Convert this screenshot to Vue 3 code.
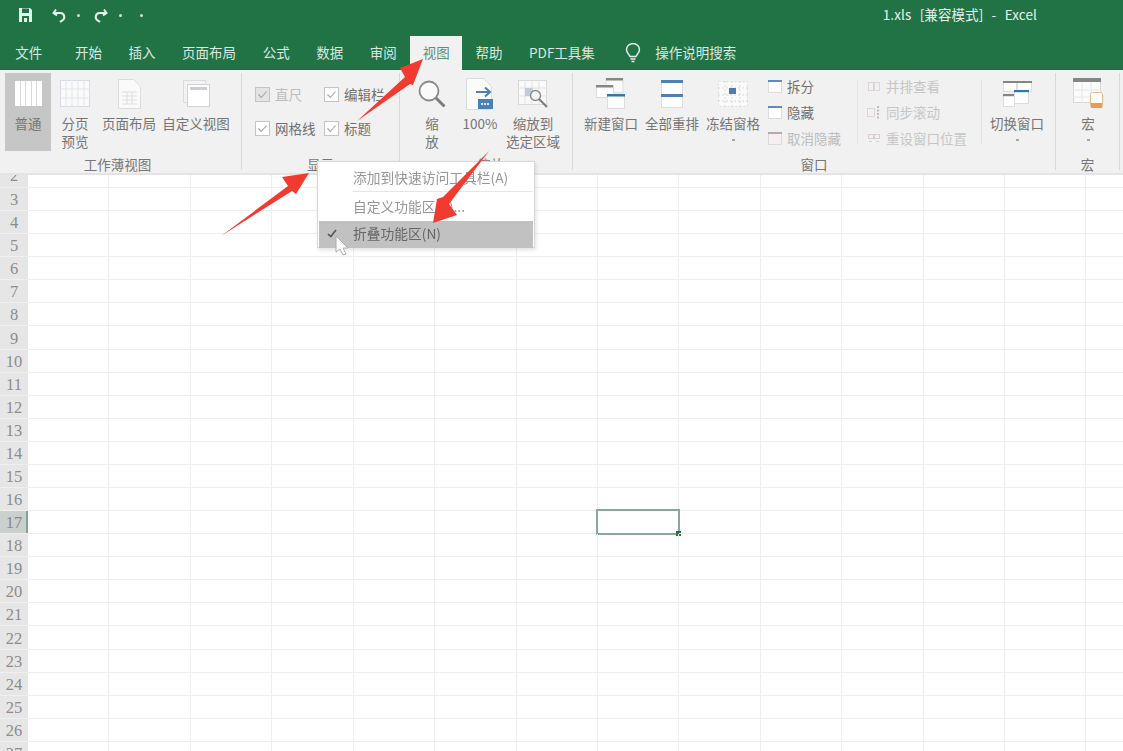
<template>
  <div class="page">
    <!-- Title bar -->
    <header class="titlebar">
      <div class="qat">
        <svg class="qat-save" width="15" height="16" viewBox="0 0 15 16">
          <path d="M1 1h11l2 2v12H1z" fill="#e8f1ec" />
          <rect x="4" y="1.5" width="7" height="4.5" fill="#217346" />
          <rect x="4" y="9" width="7" height="6" fill="#217346" />
          <rect x="6" y="11" width="3" height="4" fill="#e8f1ec" />
        </svg>
        <svg class="qat-undo" width="15" height="15" viewBox="0 0 15 15">
          <path d="M4 1.500 1.500 5 5 7.500M2 5h6.500a4 4 0 0 1 1.500 7.600L8 14" fill="none" stroke="#e8f1ec" stroke-width="2" />
        </svg>
        <span class="qat-dot"></span>
        <svg class="qat-redo" width="15" height="15" viewBox="0 0 15 15">
          <path d="M11 1.500 13.500 5 10 7.500M13 5H6.500a4 4 0 0 0-1.500 7.600L7 14" fill="none" stroke="#e8f1ec" stroke-width="2" />
        </svg>
        <span class="qat-dot second"></span>
        <span class="qat-dot third"></span>
      </div>
      <div class="doc-title">1.xls&nbsp; [兼容模式]&nbsp; -&nbsp; Excel</div>
    </header>

    <!-- Tabs -->
    <nav class="tabs">
      <span
        v-for="tab in tabs"
        :key="tab"
        :class="['tab', { active: tab === '视图', first: tab === '文件' }]"
      >{{ tab }}</span>
      <svg class="bulb" width="16" height="20" viewBox="0 0 16 20">
        <path d="M5 13.500C4 11 1.500 9.500 1.500 6.800a6.500 6.300 0 0 1 13 0C14.500 9.500 12 11 11 13.500z" fill="none" stroke="#e8f1ec" stroke-width="1.400" />
        <path d="M5.500 16h5M6.500 18.500h3" stroke="#e8f1ec" stroke-width="1.400" />
      </svg>
      <span class="tab search">操作说明搜索</span>
    </nav>

    <!-- Ribbon -->
    <section class="ribbon">
      <div class="group g-views">
        <div class="group-body">
          <div class="big selected w46">
            <div class="big-icon">
              <svg width="27" height="25" viewBox="0 0 27 25">
                <rect width="27" height="25" fill="#fff" />
                <path d="M5.500 0v25M10.500 0v25M16.500 0v25M21.500 0v25" stroke="#dadada" />
              </svg>
            </div>
            <span class="big-text">普通</span>
          </div>
          <div class="big w46">
            <div class="big-icon">
              <svg width="30" height="27" viewBox="0 0 30 27">
                <rect x=".5" y=".5" width="29" height="26" fill="#fafafa" stroke="#d8dce2" />
                <path d="M6 0v27M12 0v27M18 0v27M24 0v27M0 9h30M0 18h30" stroke="#e2e5ea" />
              </svg>
            </div>
            <span class="big-text">分页<br />预览</span>
          </div>
          <div class="big w60">
            <div class="big-icon">
              <svg width="23" height="30" viewBox="0 0 23 30">
                <path d="M.5.500h15l7 7v22H.5z" fill="#fafafa" stroke="#dcdcdc" />
                <path d="M4 13h15M4 17h15M4 21h15M4 25h15M9 13v12M14 13v12" stroke="#dedede" />
              </svg>
            </div>
            <span class="big-text">页面布局</span>
          </div>
          <div class="big w72">
            <div class="big-icon">
              <svg width="27" height="27" viewBox="0 0 27 27">
                <rect x=".5" y=".5" width="22" height="22" fill="#f2f2f2" stroke="#dcdcdc" />
                <rect x="4.500" y="4.500" width="22" height="22" fill="#fff" stroke="#d2d2d2" />
                <rect x="7" y="7" width="17" height="3" fill="#c9ced5" />
              </svg>
            </div>
            <span class="big-text">自定义视图</span>
          </div>
        </div>
        <div class="group-label">工作薄视图</div>
      </div>

      <div class="group g-show">
        <div class="group-body checks">
          <label v-for="c in checks" :key="c.text" :class="['check', { off: c.off }]">
            <svg width="15" height="15" viewBox="0 0 15 15">
              <rect x=".5" y=".5" width="14" height="14" :fill="c.off ? '#e4e4e4' : '#fff'" stroke="#c4c4c4" />
              <path d="M3.500 7.500 6.300 10.500 11.500 4.500" fill="none" stroke="#a5a5a5" stroke-width="1.100" />
            </svg>
            <span>{{ c.text }}</span>
          </label>
        </div>
        <div class="group-label">显示</div>
      </div>

      <div class="group g-zoom">
        <div class="group-body">
          <div class="big w46">
            <div class="big-icon">
              <svg width="28" height="28" viewBox="0 0 28 28">
                <circle cx="11" cy="11" r="9.500" fill="#fafafa" stroke="#8a8a8a" stroke-width="1.800" />
                <path d="M18 18 26.500 26.500" stroke="#7d7d7d" stroke-width="3" />
              </svg>
            </div>
            <span class="big-text">缩<br />放</span>
          </div>
          <div class="big w50">
            <div class="big-icon">
              <svg width="28" height="32" viewBox="0 0 28 32">
                <path d="M.5.500h17l8 8v23H.5z" fill="#fbfbfb" stroke="#dcdcdc" />
                <path d="M10 14h14M19 9.500l5 4.500-5 4.500" fill="none" stroke="#4a80b8" stroke-width="2" />
                <rect x="12" y="21" width="15" height="10" fill="#4a80b8" />
                <path d="M15 26h9" stroke="#dfe8f2" stroke-width="2" stroke-dasharray="2 1" />
              </svg>
            </div>
            <span class="big-text">100%</span>
          </div>
          <div class="big w56">
            <div class="big-icon">
              <svg width="30" height="28" viewBox="0 0 30 28">
                <rect x=".5" y=".5" width="28" height="24" fill="#fafafa" stroke="#d8d8d8" />
                <path d="M7 0v25M14 0v25M21 0v25M0 8h29M0 16h29" stroke="#e2e2e2" />
                <rect x="7" y="8" width="8" height="8" fill="#c2ccd9" />
                <circle cx="17.500" cy="15.500" r="5" fill="#f6f6f6" stroke="#8a8a8a" stroke-width="1.400" />
                <path d="M21 19 29 27" stroke="#7d7d7d" stroke-width="2.200" />
              </svg>
            </div>
            <span class="big-text">缩放到<br />选定区域</span>
          </div>
        </div>
        <div class="group-label">缩放</div>
      </div>

      <div class="group g-window">
        <div class="group-body">
          <div class="big w60">
            <div class="big-icon">
              <svg width="30" height="31" viewBox="0 0 30 31">
                <rect x="10" y=".5" width="17" height="14" fill="#f9f9f9" stroke="#ddd" />
                <rect x="10" y="0" width="17" height="2.500" fill="#858585" />
                <rect x=".5" y="7.500" width="17" height="12" fill="#fff" stroke="#ddd" />
                <rect x="0" y="7" width="17" height="2.500" fill="#858585" />
                <rect x="11.500" y="16.500" width="17" height="14" fill="#fff" stroke="#ddd" />
                <rect x="11" y="16" width="18" height="2.500" fill="#2d79a8" />
              </svg>
            </div>
            <span class="big-text">新建窗口</span>
          </div>
          <div class="big w60">
            <div class="big-icon">
              <svg width="22" height="28" viewBox="0 0 22 28">
                <rect x=".5" y=".5" width="21" height="27" fill="#fff" stroke="#ddd" />
                <rect width="22" height="3" fill="#4f80b4" />
                <rect y="14" width="22" height="3" fill="#4f80b4" />
              </svg>
            </div>
            <span class="big-text">全部重排</span>
          </div>
          <div class="big w60">
            <div class="big-icon">
              <svg width="30" height="26" viewBox="0 0 30 26">
                <rect x=".5" y=".5" width="29" height="25" fill="#fafafa" stroke="#ddd" stroke-dasharray="2 2" />
                <path d="M7 0v26M14 0v26M22 0v26M0 7h30M0 14h30M0 20h30" stroke="#d9d9d9" stroke-dasharray="2 2" />
                <rect x="11" y="7" width="7" height="6" fill="#4f7db2" />
              </svg>
            </div>
            <span class="big-text">冻结窗格</span>
            <span class="caret"></span>
          </div>
          <ul class="small-list">
            <li v-for="s in winActions" :key="s">
              <svg width="14" height="13" viewBox="0 0 14 13">
                <rect x=".5" y=".5" width="13" height="12" :fill="s === '取消隐藏' ? '#f6eef0' : '#fff'" stroke="#dcdcdc" />
                <rect width="14" height="2" :fill="s === '取消隐藏' ? '#b9a9ae' : '#5f8cbc'" />
              </svg>
              <span :class="{ faded: s === '取消隐藏' }">{{ s }}</span>
            </li>
          </ul>
          <ul class="small-list disabled">
            <li>
              <svg width="14" height="13" viewBox="0 0 14 13">
                <rect x="1.500" y="2.500" width="5" height="8" fill="none" stroke="#dcd7d7" />
                <rect x="7.500" y="2.500" width="5" height="8" fill="none" stroke="#dcd7d7" />
              </svg>
              <span>并排查看</span>
            </li>
            <li>
              <svg width="14" height="13" viewBox="0 0 14 13">
                <rect x=".5" y="2.500" width="7" height="8" fill="#f6eef0" stroke="#dcd7d7" />
                <path d="M11 0v13" stroke="#a8a8a8" stroke-width="1.400" stroke-dasharray="2 1.500" />
              </svg>
              <span>同步滚动</span>
            </li>
            <li>
              <svg width="14" height="13" viewBox="0 0 14 13">
                <rect x="1.500" y="2.500" width="5" height="4" fill="#f6eef0" stroke="#d8d0d0" />
                <rect x="7.500" y="2.500" width="5" height="4" fill="#f6eef0" stroke="#d8d0d0" />
                <path d="M2 9.500h3M9 9.500h3" stroke="#d0d0d0" />
              </svg>
              <span>重设窗口位置</span>
            </li>
          </ul>
          <div class="big w60 switch">
            <div class="big-icon">
              <svg width="29" height="26" viewBox="0 0 29 26">
                <rect x=".5" y=".5" width="13" height="10" fill="#fff" stroke="#ddd" />
                <rect x="14.500" y=".5" width="14" height="10" fill="#fff" stroke="#ddd" />
                <rect width="14" height="2" fill="#858585" />
                <rect x="14" width="15" height="2" fill="#858585" />
                <rect x=".5" y="13.500" width="11" height="12" fill="#fff" stroke="#ddd" />
                <rect y="13" width="11" height="2.200" fill="#858585" />
                <rect x="11.500" y="9.500" width="14" height="13" fill="#fff" stroke="#ddd" />
                <rect x="11" y="9" width="15" height="2.200" fill="#2d79a8" />
              </svg>
            </div>
            <span class="big-text">切换窗口</span>
            <span class="caret"></span>
          </div>
        </div>
        <div class="group-label">窗口</div>
      </div>

      <div class="group g-macro">
        <div class="group-body">
          <div class="big w50">
            <div class="big-icon">
              <svg width="31" height="31" viewBox="0 0 31 31">
                <rect x=".5" y=".5" width="27" height="24" fill="#fbfbfb" stroke="#d8d8d8" />
                <rect width="28" height="4" fill="#858585" />
                <path d="M9 4v21M18 4v21M0 12h28M0 19h28" stroke="#e6e6e6" />
                <rect x="17.500" y="14.500" width="12" height="15" rx="2" fill="#fff" stroke="#eeb88a" />
                <rect x="18" y="25" width="11" height="5" fill="#e9995a" />
              </svg>
            </div>
            <span class="big-text">宏</span>
            <span class="caret"></span>
          </div>
        </div>
        <div class="group-label">宏</div>
      </div>
    </section>

    <!-- Sheet -->
    <main class="sheet">
      <div
        v-for="row in rows"
        :key="row"
        :class="['row', { clipped: row === 2, current: row === 17 }]"
      >
        <div class="row-head">{{ row }}</div>
        <div v-for="col in 14" :key="col" class="cell">
          <div v-if="row === 17 && col === 8" class="selection"><i></i></div>
        </div>
      </div>
    </main>

    <!-- Context menu -->
    <div class="ctx-menu">
      <div class="ctx-item">添加到快速访问工具栏(A)</div>
      <div class="ctx-sep"></div>
      <div class="ctx-item">自定义功能区(R)...</div>
      <div class="ctx-item hover">
        <svg class="tick" width="10" height="9" viewBox="0 0 10 9">
          <path d="M1 5 3.800 7.500 9 1" fill="none" stroke="#555" stroke-width="1.600" />
        </svg>
        折叠功能区(N)
      </div>
    </div>

    <!-- Mouse pointer and red annotation arrows -->
    <svg class="overlay" width="1123" height="751" viewBox="0 0 1123 751">
      <path d="M336 236v16l4-3 3 6 3-1-3-6h5z" fill="#fff" stroke="#aaa" />
      <path d="M423 59 400 68 405 77 357 121 410 84 413 85z" fill="#f23b30" />
      <path d="M309 173 282 177 288 186 221 236 292 191 296 194z" fill="#f23b30" />
      <path d="M433 223 457 215 449 204 489 151 443 197 437 199z" fill="#f23b30" />
    </svg>
  </div>
</template>

<script setup>
const tabs = ['文件', '开始', '插入', '页面布局', '公式', '数据', '审阅', '视图', '帮助', 'PDF工具集']

const checks = [
  { text: '直尺', off: true },
  { text: '编辑栏' },
  { text: '网格线' },
  { text: '标题' }
]

const winActions = ['拆分', '隐藏', '取消隐藏']

const rows = Array.from({ length: 26 }, (_, i) => i + 2)
</script>

<style>
html,
body {
  margin: 0;
  overflow: hidden;
  background: #fff;
}
</style>

<style scoped>
.page {
  position: relative;
  width: 1123px;
  height: 751px;
  overflow: hidden;
  filter: blur(0.6px);
  font: 13.500px "Noto Sans CJK SC", "Noto Sans", sans-serif;
  color: #707070;
}

/* Title bar */
.titlebar {
  height: 36px;
  background: #217346;
  display: flex;
  justify-content: space-between;
  align-items: flex-start;
  color: #e8f1ec;
}
.qat {
  display: flex;
  align-items: center;
  height: 30px;
  padding-left: 18px;
}
.qat-undo {
  margin-left: 19px;
}
.qat-dot {
  width: 3px;
  height: 3px;
  margin-left: 10px;
  background: #cfe0d6;
  border-radius: 50%;
}
.qat-redo {
  margin-left: 13px;
}
.qat-dot.second {
  margin-left: 11px;
}
.qat-dot.third {
  margin-left: 18px;
}
.doc-title {
  margin-right: 86px;
  line-height: 29px;
  font-size: 13.500px;
  word-spacing: 1px;
  letter-spacing: 0.1px;
}

/* Tabs */
.tabs {
  height: 34px;
  background: #217346;
  display: flex;
  align-items: flex-end;
  color: #dbe8e0;
  box-sizing: border-box;
  padding-left: 2px;
  border-bottom: 1px solid #1c6a3f;
}
.tab {
  height: 33px;
  line-height: 32px;
  padding: 0 13.300px;
  white-space: nowrap;
}
.tab.first {
  margin-right: 6px;
}
.tab.active {
  height: 34px;
  margin-bottom: -1px;
  padding: 0 12.500px;
  background: #f1f1f1;
  color: #5f8f78;
}
.bulb {
  margin: 0 1px 6px 17px;
}
.tab.search {
  padding-left: 13px;
}

/* Ribbon */
.ribbon {
  height: 103px;
  background: #f1f1f1;
  border-bottom: 2px solid #e4e4e4;
  display: flex;
  align-items: flex-start;
}
.group {
  height: 97px;
  margin-top: 3px;
  flex: none;
  display: flex;
  flex-direction: column;
  box-sizing: border-box;
  border-right: 1px solid #d9d9d9;
}
.group-body {
  display: flex;
  height: 83px;
  gap: 1px;
}
.group-label {
  height: 14px;
  line-height: 16px;
  text-align: center;
  color: #777;
}
.g-views {
  width: 242px;
  padding-left: 5px;
}
.g-views .group-label {
  margin: 0 6px 0 -5px;
}
.g-show {
  width: 158px;
}
.g-zoom {
  width: 173px;
  padding-left: 9px;
}
.g-zoom .group-body {
  gap: 0;
}
.g-window {
  width: 483px;
  padding-left: 8px;
}
.g-window .group-label {
  margin-left: -8px;
}
.g-macro {
  width: 64px;
  padding-left: 7px;
}
.g-macro .group-label {
  margin-left: -7px;
}

.big {
  height: 78px;
  display: flex;
  flex-direction: column;
  align-items: center;
  flex: none;
}
.big.selected {
  background: #c6c6c6;
}
.w46 {
  width: 46px;
}
.w50 {
  width: 50px;
}
.w56 {
  width: 56px;
}
.w60 {
  width: 60px;
}
.w72 {
  width: 72px;
}
.big-icon {
  height: 41px;
  display: flex;
  align-items: center;
  justify-content: center;
}
.big-text {
  line-height: 18px;
  text-align: center;
  white-space: nowrap;
  color: #757575;
}
.caret {
  width: 3px;
  height: 2px;
  margin-top: 7px;
  background: #a5a5a5;
}

/* Checkbox block */
.checks {
  display: grid;
  grid-template-columns: 69px 1fr;
  grid-auto-rows: 34px;
  padding: 4px 0 0 13px;
  box-sizing: border-box;
  gap: 0;
}
.check {
  display: flex;
  align-items: center;
  gap: 5px;
  white-space: nowrap;
}
.check.off {
  color: #bcbcbc;
}

/* Small command lists */
.small-list {
  list-style: none;
  margin: 0;
  padding: 0;
  width: 88px;
  height: 78px;
  box-sizing: border-box;
}
.small-list:first-of-type {
  margin-left: 4px;
}
.small-list li {
  height: 26px;
  display: flex;
  align-items: center;
  gap: 5px;
  white-space: nowrap;
}
.small-list .faded {
  color: #bcbcbc;
}
.small-list.disabled {
  width: 125px;
  height: 64px;
  margin-top: 7px;
  padding: 0 0 0 9px;
  border-left: 1px solid #e4e4e4;
  border-right: 1px solid #e4e4e4;
  color: #c6c6c6;
}
.small-list.disabled li {
  position: relative;
  top: -7px;
}
.switch {
  margin-left: 4px;
}

/* Sheet */
.sheet {
  height: 576px;
  overflow: hidden;
}
.row {
  display: grid;
  grid-template-columns: 28px repeat(14, 81.430px);
  grid-template-rows: 100%;
  height: 23.080px;
  box-sizing: border-box;
}
.row.clipped {
  height: 13px;
}
.row-head {
  background: #e6e6e6;
  border-bottom: 1px solid #f0f0f0;
  color: #8c8c8c;
  font: 16.500px/22px "Liberation Serif", serif;
  display: flex;
  align-items: center;
  justify-content: center;
  padding-top: 2px;
  box-sizing: border-box;
  min-height: 0;
}
.row.clipped .row-head {
  align-items: flex-end;
  padding-top: 0;
  overflow: hidden;
}
.row.current .row-head {
  background: #cbcfce;
  box-shadow: inset -2px 0 0 #84a596;
  color: #858a88;
}
.cell {
  position: relative;
  border-right: 1px solid #eeeeee;
  border-bottom: 1px solid #eeeeee;
}
.selection {
  position: absolute;
  inset: -2px;
  border: 2px solid #86a999;
}
.selection i {
  position: absolute;
  right: -3px;
  bottom: -3px;
  width: 5px;
  height: 5px;
  background: #217346;
}

/* Context menu */
.ctx-menu {
  position: absolute;
  left: 317px;
  top: 161px;
  width: 218px;
  height: 87px;
  box-sizing: border-box;
  padding: 1px;
  background: #fff;
  border: 1px solid #d8d8d8;
  box-shadow: 1px 2px 4px rgba(0, 0, 0, 0.12);
  color: #969696;
  font-size: 13.750px;
}
.ctx-item {
  position: relative;
  height: 28px;
  line-height: 28px;
  padding-left: 34px;
  white-space: nowrap;
}
.ctx-sep {
  height: 1px;
  margin-left: 34px;
  background: #e6e6e6;
}
.ctx-item.hover {
  height: 27px;
  line-height: 25px;
  background: #c1c1c1;
  color: #666;
  margin-top: 1px;
}
.tick {
  position: absolute;
  left: 8px;
  top: 8px;
}
.overlay {
  position: absolute;
  left: 0;
  top: 0;
  pointer-events: none;
}
</style>
